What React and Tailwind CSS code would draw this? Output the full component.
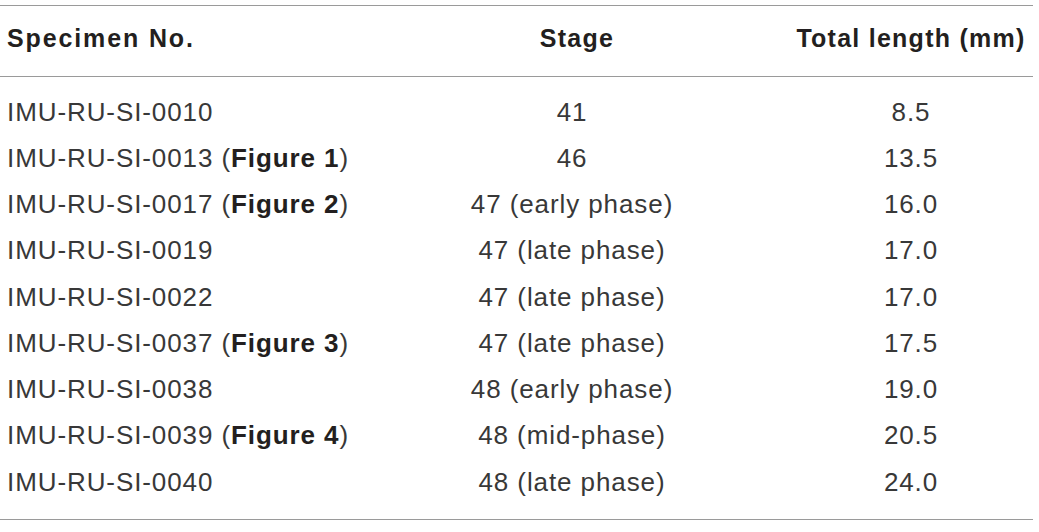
const rows = [
  { id: "IMU-RU-SI-0010", fig: null, stage: "41", length: "8.5" },
  { id: "IMU-RU-SI-0013", fig: "Figure 1", stage: "46", length: "13.5" },
  { id: "IMU-RU-SI-0017", fig: "Figure 2", stage: "47 (early phase)", length: "16.0" },
  { id: "IMU-RU-SI-0019", fig: null, stage: "47 (late phase)", length: "17.0" },
  { id: "IMU-RU-SI-0022", fig: null, stage: "47 (late phase)", length: "17.0" },
  { id: "IMU-RU-SI-0037", fig: "Figure 3", stage: "47 (late phase)", length: "17.5" },
  { id: "IMU-RU-SI-0038", fig: null, stage: "48 (early phase)", length: "19.0" },
  { id: "IMU-RU-SI-0039", fig: "Figure 4", stage: "48 (mid-phase)", length: "20.5" },
  { id: "IMU-RU-SI-0040", fig: null, stage: "48 (late phase)", length: "24.0" },
];

export default function App() {
  return (
    <div className="w-[1039px] h-[532px] bg-white pt-[5px] font-['Liberation_Sans',Arial,sans-serif]">
      <div className="w-[1033px] border-t border-b border-[#9a9a9a]">
        {/* header */}
        <div className="grid grid-cols-[420px_304px_1fr_244px] items-center h-[71px] pb-[4px] border-b border-[#9a9a9a] text-[25px] font-bold text-[#231f20]">
          <div className="pl-[7px] tracking-[0.075em]">Specimen No.</div>
          <div className="text-center pl-[10px] tracking-[0.05em]">Stage</div>
          <div></div>
          <div className="text-center tracking-[0.05em]">Total length (mm)</div>
        </div>

        {/* body */}
        <div className="pt-[12px] pb-[14px] text-[26px] text-[#383838] tracking-[0.035em]">
          {rows.map((r) => (
            <div
              key={r.id}
              className="grid grid-cols-[420px_304px_1fr_244px] items-center h-[46.25px]"
            >
              <div className="pl-[7px] whitespace-nowrap">
                {r.id}
                {r.fig && (
                  <>
                    {" "}(<span className="font-bold text-[#231f20]">{r.fig}</span>)
                  </>
                )}
              </div>
              <div className="text-center whitespace-nowrap">{r.stage}</div>
              <div></div>
              <div className="text-center">{r.length}</div>
            </div>
          ))}
        </div>
      </div>
    </div>
  );
}
